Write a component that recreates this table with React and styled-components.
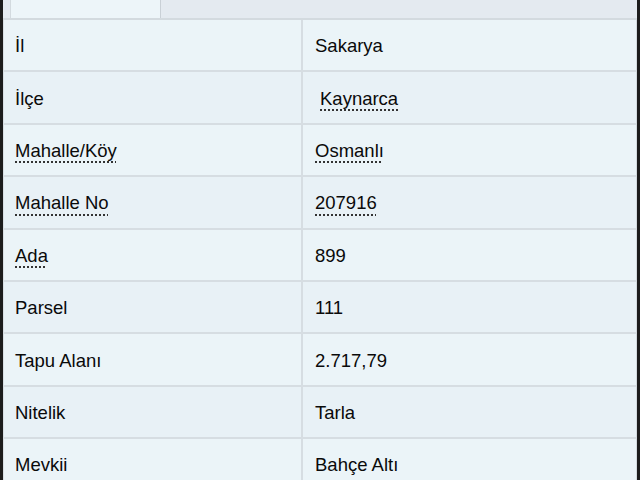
import React from 'react';
import styled, { createGlobalStyle } from 'styled-components';

const GlobalStyle = createGlobalStyle`
    html, body {
        margin: 0;
        padding: 0;
        background: #ebf4f8;
        overflow: hidden;
    }
    body {
        font-family: "Liberation Sans", Arial, sans-serif;
        color: #0a0a0a;
    }
`;

const Frame = styled.div`
    width: 640px;
    height: 480px;
    box-sizing: border-box;
    border-left: 3px solid #1c1c1c;
    border-right: 3px solid #1c1c1c;
    background: #ebf4f8;
    overflow: hidden;
`;

const TabStrip = styled.div`
    display: flex;
    height: 18px;
    background: #e4eaf0;
    border-bottom: 2px solid #d3dadf;
    padding-left: 7px;
`;

const Tab = styled.div`
    width: 151px;
    height: 100%;
    box-sizing: border-box;
    background: ${p => (p.active ? '#edf5f9' : 'transparent')};
    border-left: 1px solid ${p => (p.active ? '#d3dadf' : 'transparent')};
    border-right: 1px solid ${p => (p.active ? '#c9d0d6' : 'transparent')};
`;

const Table = styled.div`
    display: grid;
    grid-template-columns: 297px 1fr;
    border-left: 1px solid #d8dfe4;
    border-right: 1px solid #d3dadf;
`;

const Cell = styled.div`
    height: 48.4px;
    box-sizing: content-box;
    display: flex;
    align-items: center;
    padding-top: 2px;
    padding-left: ${p => (p.value ? '12px' : '11px')};
    border-bottom: 2px solid #d6dde2;
    border-left: ${p => (p.value ? '2px solid #d6dde2' : 'none')};
    background: ${p => (p.shade ? '#e8f1f6' : '#ebf4f8')};
    font-size: 18.5px;
    white-space: nowrap;
`;

const Abbr = styled.span`
    text-decoration: underline dotted #333;
    text-decoration-thickness: 1.5px;
    text-underline-offset: 5px;
    margin-left: ${p => p.indent || 0}px;
`;

const rows = [
    { label: 'İl', value: 'Sakarya' },
    { label: 'İlçe', value: 'Kaynarca', valueAbbr: true, indent: 5 },
    { label: 'Mahalle/Köy', labelAbbr: true, value: 'Osmanlı', valueAbbr: true },
    { label: 'Mahalle No', labelAbbr: true, value: '207916', valueAbbr: true },
    { label: 'Ada', labelAbbr: true, value: '899' },
    { label: 'Parsel', value: '111' },
    { label: 'Tapu Alanı', value: '2.717,79' },
    { label: 'Nitelik', value: 'Tarla' },
    { label: 'Mevkii', value: 'Bahçe Altı' },
];

const App = () => {
    return (
        <>
            <GlobalStyle />
            <Frame>
                <TabStrip>
                    <Tab active />
                    <Tab />
                </TabStrip>
                <Table>
                    {rows.map((r, i) => (
                        <React.Fragment key={r.label}>
                            <Cell shade={i % 2 === 1}>
                                {r.labelAbbr ? <Abbr>{r.label}</Abbr> : r.label}
                            </Cell>
                            <Cell value shade={i % 2 === 1}>
                                {r.valueAbbr ? <Abbr indent={r.indent}>{r.value}</Abbr> : r.value}
                            </Cell>
                        </React.Fragment>
                    ))}
                </Table>
            </Frame>
        </>
    );
};

export default App;
